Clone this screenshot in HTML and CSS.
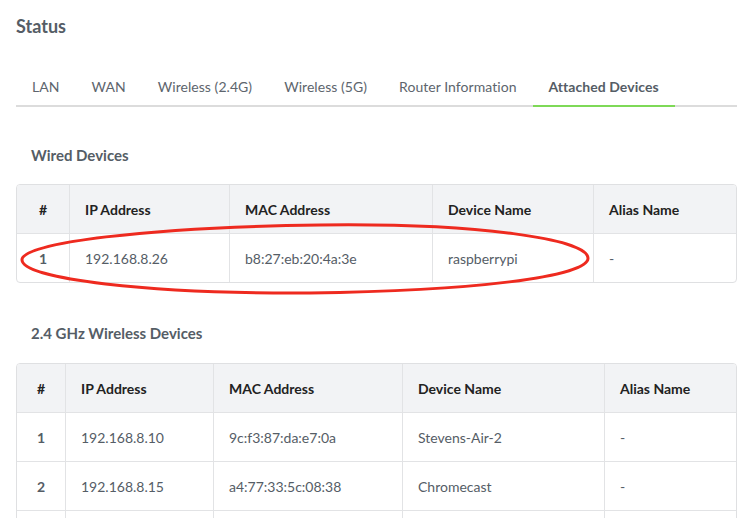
FILE: index.html
```html
<!DOCTYPE html>
<html>
<head>
<meta charset="utf-8">
<link rel="stylesheet" href="styles.css">
</head>
<body>
<div class="page">
  <h1 class="title">Status</h1>
  <nav class="tabs">
    <a class="tab">LAN</a>
    <a class="tab">WAN</a>
    <a class="tab">Wireless (2.4G)</a>
    <a class="tab">Wireless (5G)</a>
    <a class="tab">Router Information</a>
    <a class="tab active">Attached Devices</a>
  </nav>

  <section class="section wired">
    <h2 class="section-title">Wired Devices</h2>
    <div class="table-wrap">
      <table class="devices t1">
        <colgroup>
          <col class="c1"><col class="c2"><col class="c3"><col class="c4"><col class="c5">
        </colgroup>
        <thead>
          <tr><th class="num">#</th><th>IP Address</th><th>MAC Address</th><th>Device Name</th><th>Alias Name</th></tr>
        </thead>
        <tbody>
          <tr><td class="num">1</td><td>192.168.8.26</td><td>b8:27:eb:20:4a:3e</td><td>raspberrypi</td><td>-</td></tr>
        </tbody>
      </table>
      <svg class="circle" viewBox="0 0 590 80" width="590" height="80" aria-hidden="true">
        <path d="M 300 10 C 459 8 567 24 568 43 C 569 62 450 76 290 78 C 128 79 3 64 2 45 C 1 28 128 12 300 10 Z" fill="none" stroke="#ee2a1f" stroke-width="3"/>
      </svg>
    </div>
  </section>

  <section class="section wireless">
    <h2 class="section-title">2.4 GHz Wireless Devices</h2>
    <table class="devices t2">
      <colgroup>
        <col class="c1"><col class="c2"><col class="c3"><col class="c4"><col class="c5">
      </colgroup>
      <thead>
        <tr><th class="num">#</th><th>IP Address</th><th>MAC Address</th><th>Device Name</th><th>Alias Name</th></tr>
      </thead>
      <tbody>
        <tr><td class="num">1</td><td>192.168.8.10</td><td>9c:f3:87:da:e7:0a</td><td>Stevens-Air-2</td><td>-</td></tr>
        <tr><td class="num">2</td><td>192.168.8.15</td><td>a4:77:33:5c:08:38</td><td>Chromecast</td><td>-</td></tr>
        <tr><td class="num">&nbsp;</td><td>&nbsp;</td><td>&nbsp;</td><td>&nbsp;</td><td>&nbsp;</td></tr>
      </tbody>
    </table>
  </section>
</div>
</body>
</html>
```

FILE: styles.css
```css
html, body {
  margin: 0;
  background: #ffffff;
}
body {
  font-family: Lato, "Open Sans", sans-serif;
  color: #555d66;
  overflow: hidden;
}
.page {
  display: flex;
  flex-direction: column;
  padding: 14px 10px 0 16px;
}
.title {
  margin: 0;
  font-size: 18px;
  line-height: 24px;
  font-weight: 700;
  color: #555d66;
}
.tabs {
  display: flex;
  margin-top: 32px;
  border-bottom: 2px solid #dcdcdc;
}
.tab {
  padding: 7px 16px 8px;
  line-height: 20px;
  font-size: 14px;
  letter-spacing: 0.05px;
  color: #5d656d;
  margin-bottom: -2px;
  border-bottom: 2px solid transparent;
}
.tab.active {
  font-weight: 700;
  color: #555d66;
  border-bottom-color: #7ed957;
}
.section {
  display: flex;
  flex-direction: column;
}
.wired { margin-top: 38px; }
.wireless { margin-top: 40px; }
.section-title {
  margin: 0 0 19px 15px;
  font-size: 15px;
  line-height: 20px;
  font-weight: 700;
  color: #555d66;
}
.wireless .section-title { margin-bottom: 20px; }
.table-wrap {
  position: relative;
}
.devices {
  width: 721px;
  table-layout: fixed;
  border-collapse: separate;
  border-spacing: 0;
  border: 1px solid #dfe0e2;
  border-radius: 4px;
  font-size: 14px;
}
.devices th, .devices td {
  height: 48px;
  padding: 0 0 0 15px;
  text-align: left;
  vertical-align: middle;
  box-sizing: border-box;
}
.devices th {
  background: #f2f3f5;
  color: #222222;
  font-weight: 700;
  font-size: 14px;
}
.devices th:first-child { border-top-left-radius: 3px; }
.devices th:last-child { border-top-right-radius: 3px; }
.devices td {
  border-top: 1px solid #e2e3e5;
  color: #555d66;
  height: 49px;
}
.devices th + th, .devices td + td {
  border-left: 1px solid #e2e3e5;
}
.devices .num {
  text-align: center;
  padding: 0;
  font-weight: 700;
}
.devices td.num { color: #555d66; }

.t1 .c1 { width: 52px; }
.t1 .c2 { width: 160px; }
.t1 .c3 { width: 203px; }
.t1 .c4 { width: 161px; }
.t1 .c5 { width: 143px; }

.t2 .c1 { width: 48px; }
.t2 .c2 { width: 148px; }
.t2 .c3 { width: 189px; }
.t2 .c4 { width: 202px; }
.t2 .c5 { width: 132px; }

.circle {
  position: absolute;
  left: 4px;
  top: 31px;
  pointer-events: none;
}
```
